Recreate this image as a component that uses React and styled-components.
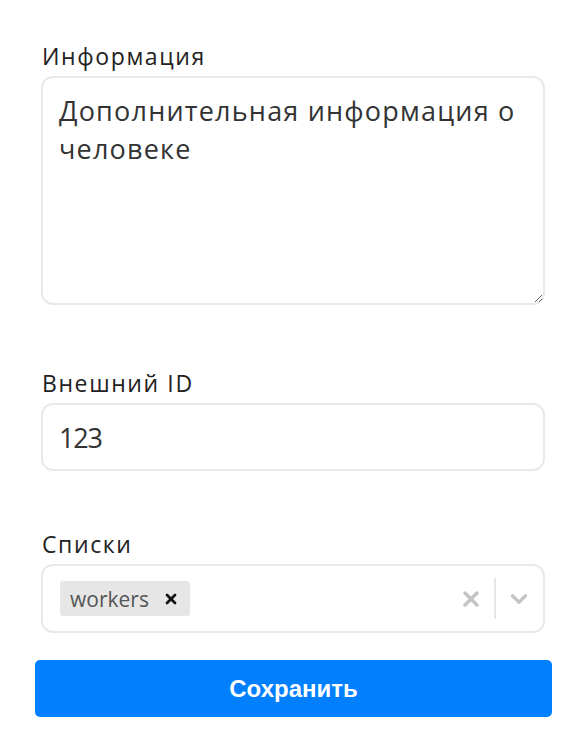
import styled, { createGlobalStyle } from "styled-components"
import { X, ChevronDown } from "lucide-react"

const GlobalStyle = createGlobalStyle`
	body {
		margin: 0;
		background: #fff;
		font-family: "Open Sans", "Liberation Sans", sans-serif;
		color: #333;
	}
`

const Form = styled.form`
	width: 504px;
	padding: 43px 0 0 41px;
	display: flex;
	flex-direction: column;
`

const Field = styled.div`
	display: flex;
	flex-direction: column;
	margin-bottom: ${(p) => p.$gap || 0}px;
`

const Label = styled.label`
	font-size: 23px;
	line-height: 26px;
	color: #222;
	margin: 0 0 7px 1px;
	letter-spacing: 1.6px;
`

const Box = styled.div`
	box-sizing: border-box;
	border: 2px solid #e9e9e9;
	border-radius: 12px;
	background: #fff;
`

const TextArea = styled(Box).attrs({ as: "textarea" })`
	height: 229px;
	padding: 14px 16px;
	font-family: inherit;
	font-size: 27px;
	line-height: 38px;
	color: #333;
	resize: vertical;
	outline: none;
	letter-spacing: 1.2px;
`

const Input = styled(Box).attrs({ as: "input" })`
	height: 68px;
	padding: 0 16px;
	font-family: inherit;
	font-size: 27px;
	letter-spacing: -1.2px;
	color: #333;
	outline: none;
`

const Select = styled(Box)`
	height: 69px;
	display: flex;
	align-items: center;
	padding: 0 1px 0 17px;
`

const Values = styled.div`
	flex: 1;
	display: flex;
	gap: 6px;
`

const Chip = styled.span`
	display: inline-flex;
	align-items: center;
	gap: 14px;
	height: 35px;
	padding: 0 11px 0 10px;
	background: #e6e6e6;
	border-radius: 3px;
	font-size: 21px;
	color: #555;
`

const IconBtn = styled.span`
	display: flex;
	align-items: center;
	justify-content: center;
	width: ${(p) => p.$w || 40}px;
	color: ${(p) => p.$color || "#c4c4c4"};
`

const Divider = styled.span`
	width: 2px;
	height: 41px;
	background: #e6e6e6;
`

const SaveButton = styled.button`
	margin: 27px 0 0 -6px;
	width: 517px;
	height: 57px;
	border: none;
	border-radius: 5px;
	background: #0080ff;
	color: #fff;
	font-family: "Liberation Sans", Arial, sans-serif;
	font-weight: 700;
	font-size: 24px;
	cursor: pointer;
`

export default function App() {
	return (
		<>
			<GlobalStyle />
			<Form onSubmit={(e) => e.preventDefault()}>
				<Field $gap={65}>
					<Label>Информация</Label>
					<TextArea defaultValue="Дополнительная информация о человеке" />
				</Field>
				<Field $gap={60}>
					<Label>Внешний ID</Label>
					<Input defaultValue="123" />
				</Field>
				<Field>
					<Label>Списки</Label>
					<Select>
						<Values>
							<Chip>
								workers
								<X size={16} strokeWidth={4} color="#111" />
							</Chip>
						</Values>
						<IconBtn $w={46}>
							<X size={24} strokeWidth={3.5} />
						</IconBtn>
						<Divider />
						<IconBtn $w={46}>
							<ChevronDown size={26} strokeWidth={3} />
						</IconBtn>
					</Select>
				</Field>
				<SaveButton type="submit">Сохранить</SaveButton>
			</Form>
		</>
	)
}
